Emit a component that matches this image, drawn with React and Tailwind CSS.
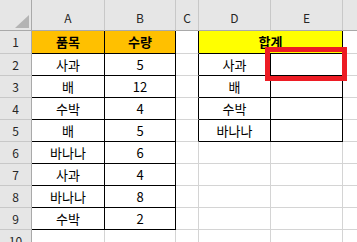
import React from 'react';

const font = { fontFamily: '"Noto Sans CJK KR", "Noto Sans", sans-serif' };

// column widths include the 1px right border
const W = ['w-[32px]', 'w-[73px]', 'w-[71px]', 'w-[23px]', 'w-[72px]', 'w-[72px]', 'flex-1'];
const letters = ['A', 'B', 'C', 'D', 'E', ''];

const itemsA = ['사과', '배', '수박', '배', '바나나', '사과', '바나나', '수박'];
const itemsB = ['5', '12', '4', '5', '6', '4', '8', '2'];
const itemsD = ['사과', '배', '수박', '바나나'];

const Cell = ({ className = '', children }) => (
  <div className={`shrink-0 h-full flex items-center justify-center border-r border-b ${className}`}>
    {children}
  </div>
);

const RowHead = ({ n }) => (
  <Cell className="w-[32px] bg-[#e6e6e6] border-r-[#a9a9a9] border-b-[#c8c8c8] text-[12px] text-[#262626]">{n}</Cell>
);

const App = () => {
  return (
    <div className="relative w-[357px] h-[242px] overflow-hidden bg-white text-[13px] text-black" style={font}>
      {/* column header */}
      <div className="flex h-[31px]">
        <div className="shrink-0 w-[32px] h-full bg-[#e6e6e6] border-r border-b border-r-[#a9a9a9] border-b-[#a9a9a9] flex items-end justify-end pr-[2px] pb-[2px]">
          <svg width="14" height="13" viewBox="0 0 14 13">
            <polygon points="14,0 14,13 0,13" fill="#b4b4b4" />
          </svg>
        </div>
        {letters.map((l, i) => (
          <div
            key={i}
            className={`${W[i + 1]} shrink-0 h-full bg-[#e6e6e6] border-b border-b-[#a9a9a9] ${i < 5 ? 'border-r border-r-[#c8c8c8]' : ''} flex items-center justify-center pt-[6px] text-[12px] text-[#262626]`}
          >
            {l}
          </div>
        ))}
      </div>

      {/* row 1 */}
      <div className="flex h-[23px]">
        <RowHead n="1" />
        <Cell className="w-[73px] bg-[#ffc000] border-r-black border-b-black font-bold">품목</Cell>
        <Cell className="w-[71px] bg-[#ffc000] border-r-black border-b-black font-bold">수량</Cell>
        <Cell className="w-[23px] border-r-black border-b-[#d4d4d4]" />
        <Cell className="w-[144px] bg-[#ffff00] border-r-black border-b-black font-bold">합계</Cell>
        <Cell className="flex-1 border-r-0 border-b-[#d4d4d4]" />
      </div>

      {/* rows 2-9 */}
      {itemsA.map((a, i) => {
        const inD = i < 4;
        return (
          <div key={i} className="flex h-[22px]">
            <RowHead n={i + 2} />
            <Cell className="w-[73px] border-r-black border-b-black">{a}</Cell>
            <Cell className="w-[71px] border-r-black border-b-black">{itemsB[i]}</Cell>
            <Cell className={`w-[23px] border-b-[#d4d4d4] ${inD ? 'border-r-black' : 'border-r-[#d4d4d4]'}`} />
            <Cell className={`w-[72px] ${inD ? 'border-r-black border-b-black' : 'border-r-[#d4d4d4] border-b-[#d4d4d4]'}`}>
              {inD ? itemsD[i] : null}
            </Cell>
            <Cell className={`w-[72px] ${inD ? 'border-r-black border-b-black' : 'border-r-[#d4d4d4] border-b-[#d4d4d4]'}`} />
            <Cell className="flex-1 border-r-0 border-b-[#d4d4d4]" />
          </div>
        );
      })}

      {/* row 10 */}
      <div className="flex h-[22px]">
        <div className="shrink-0 w-[32px] h-full bg-[#e6e6e6] border-r border-r-[#a9a9a9] flex items-center justify-center text-[12px] text-[#262626]">10</div>
        <div className="shrink-0 w-[73px] h-full border-r border-r-[#d4d4d4]" />
        <div className="shrink-0 w-[71px] h-full border-r border-r-[#d4d4d4]" />
        <div className="shrink-0 w-[23px] h-full border-r border-r-[#d4d4d4]" />
        <div className="shrink-0 w-[72px] h-full border-r border-r-[#d4d4d4]" />
        <div className="shrink-0 w-[72px] h-full border-r border-r-[#d4d4d4]" />
      </div>

      {/* selection highlight */}
      <div className="absolute left-[265px] top-[47px] w-[82px] h-[34px] border-[5px] border-[#ed1c24]" />
    </div>
  );
};

export default App;
